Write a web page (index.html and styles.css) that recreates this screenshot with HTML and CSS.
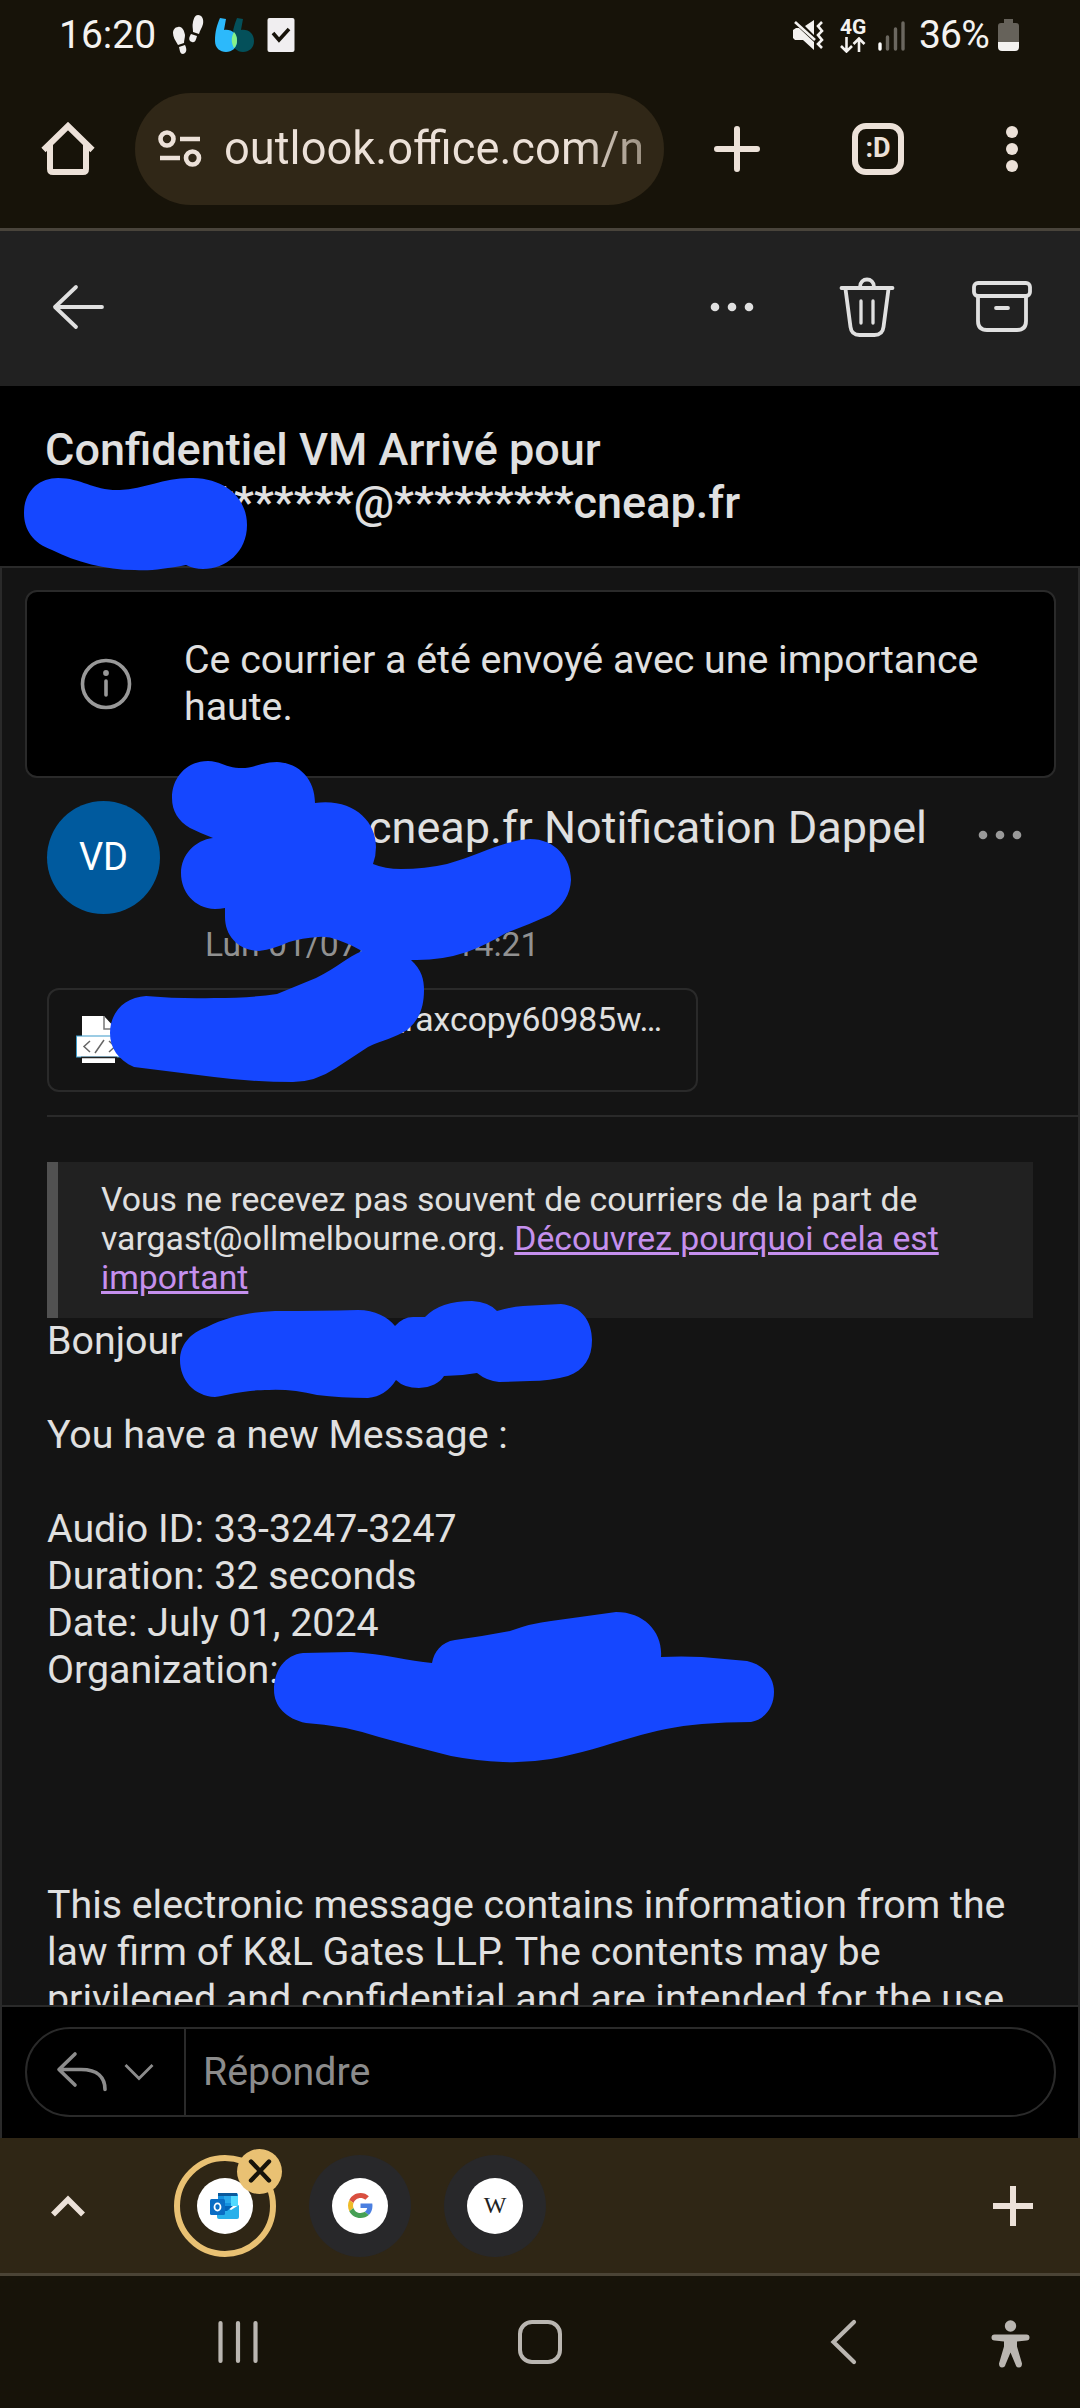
FILE: index.html
```html
<!DOCTYPE html>
<html lang="fr">
<head>
  <meta charset="UTF-8" />
  <meta name="viewport" content="width=device-width, initial-scale=1.0"/>
  <title>Outlook</title>
  <link rel="stylesheet" href="styles.css">
</head>
<body>

  <div class="status-bar">
    <span class="clock">16:20</span>
    <svg class="steps" width="32" height="40" viewBox="0 0 32 40" fill="#f0eeee">
      <path d="M6 12c4-1 6 3 7 8 0 3-1 5-1 8l-6 2C3 25 1 22 1 18c0-3 2-6 5-6zM7 32l6-2c2 4 2 8-2 9-3 0-3-3-4-7z"/>
      <path d="M26 0c4 0 6 4 5 9-1 4-3 6-4 10l-6-2c0-4-1-6 0-10 1-4 2-7 5-7zM19 19l6 2c-1 4-2 7-5 6-4-1-3-5-1-8z"/>
    </svg>
    <svg class="quotes" width="40" height="34" viewBox="0 0 40 34">
      <path d="M22 0l6 1-2 11c8-1 13 4 13 11s-5 11-11 11-11-5-11-11c0-8 2-16 5-23z" fill="#04505a"/>
      <path d="M5 0l6 1-2 11c8-1 13 4 13 11s-5 11-11 11S0 30 0 23C0 13 2 7 5 0z" fill="#2cb9fb"/>
      <path d="M19 14c4 4 4 13 0 16-3-5-3-11 0-16z" fill="#86f28a"/>
    </svg>
    <svg class="check" width="28" height="34" viewBox="0 0 28 34">
      <rect x="0.500" width="27" height="34" rx="2" fill="#f0eef0"/>
      <path d="M6 15l6 7L22 11" fill="none" stroke="#17130a" stroke-width="3.600"/>
    </svg>
    <svg class="mute" width="31" height="30" viewBox="0 0 31 30">
      <path d="M0 10l3-2h3l15 14v8L10 20H2l-2-2zM12 6l9-6v15z" fill="#f4f2f0"/>
      <path d="M2 2l20 18" stroke="#f4f2f0" stroke-width="2.600"/>
      <path d="M29 2l-4 4 4 5-4 4 4 5-4 4 4 4" fill="none" stroke="#f4f2f0" stroke-width="2.600"/>
    </svg>
    <div class="network">
      <span>4G</span>
      <svg width="26" height="16" viewBox="0 0 26 16" fill="none" stroke="#f4f2f0" stroke-width="2.600">
        <path d="M6.500 0v14M1 9l5.500 5.500L12 9M19 15V2M13.500 7L19 1.500 24.500 7"/>
      </svg>
    </div>
    <svg class="signal" width="28" height="31" viewBox="0 0 28 31" stroke-width="3.400" stroke-linecap="round">
      <path d="M2 24v5" stroke="#fff"/>
      <path d="M9.500 17v12M17.500 9v20M25 3v26" stroke="#6b675f"/>
    </svg>
    <span class="percent">36%</span>
    <svg class="battery" width="22" height="32" viewBox="0 0 22 32">
      <path d="M6 0h9v4h3q3 0 3 3v16H0V7q0-3 3-3h3z" fill="#66625a"/>
      <path d="M0 23h21v5q0 4-4 4H4q-4 0-4-4z" fill="#f4f2f0"/>
    </svg>
  </div>

  <div class="browser-bar">
    <svg class="home" width="54" height="54" viewBox="0 0 54 54" fill="none" stroke="#ece1d8" stroke-width="6">
      <path d="M2.500 28L27 4l24.500 24"/>
      <path d="M9 23v24q0 3 3 3h30q3 0 3-3V23"/>
    </svg>
    <div class="url-pill">
      <svg width="44" height="38" viewBox="0 0 44 38" fill="none" stroke="#ece1d8" stroke-width="4.600">
        <circle cx="9" cy="9" r="6.500"/>
        <path d="M22 9h20M2 28h20"/>
        <circle cx="34.500" cy="28" r="6.500"/>
      </svg>
      <span class="url">outlook.office.com/n</span>
    </div>
    <svg class="new-tab" width="48" height="48" viewBox="0 0 48 48" stroke="#ece1d8" stroke-width="6" stroke-linecap="round">
      <path d="M4 24h40M24 4v40"/>
    </svg>
    <div class="tab-count">:D</div>
    <svg class="menu" width="14" height="48" viewBox="0 0 14 48" fill="#ece1d8">
      <circle cx="7" cy="7" r="6"/><circle cx="7" cy="24" r="6"/><circle cx="7" cy="41" r="6"/>
    </svg>
  </div>

  <header>
    <svg class="back" width="54" height="46" viewBox="0 0 54 46" fill="none" stroke="#e0e0e0" stroke-width="3.800" stroke-linecap="round" stroke-linejoin="round">
      <path d="M50 23H3M24 3L3 23l21 20"/>
    </svg>
    <svg class="more" width="44" height="10" viewBox="0 0 44 10" fill="#e0e0e0">
      <circle cx="5" cy="5" r="4.300"/><circle cx="22" cy="5" r="4.300"/><circle cx="39" cy="5" r="4.300"/>
    </svg>
    <svg class="trash" width="56" height="60" viewBox="0 0 56 60" fill="none" stroke="#e0e0e0" stroke-width="3.800" stroke-linecap="round">
      <path d="M2.500 11h51M21 10c0-10 14-10 14 0M6.500 12l5 38q1 8 9 8h15q8 0 9-8l5-38"/>
      <path d="M22 24v22M34 24v22" stroke-width="3.300"/>
    </svg>
    <svg class="archive" width="60" height="52" viewBox="0 0 60 52" fill="none" stroke="#e0e0e0" stroke-width="3.800">
      <rect x="2" y="2" width="56" height="13" rx="4"/>
      <path d="M6 15v25q0 9 9 9h30q9 0 9-9V15"/>
      <path d="M24 27h12" stroke-linecap="round"/>
    </svg>
  </header>

  <h1 class="subject">Confidentiel VM Arrivé pour<br><span class="address">*******@*********cneap.fr</span></h1>

  <main class="mail">
    <div class="scroll">
      <div class="notice">
        <svg width="52" height="52" viewBox="0 0 52 52" fill="none" stroke="#999" stroke-width="3.600">
          <circle cx="26" cy="26" r="23.500"/>
          <path d="M26 23v14" stroke-linecap="round"/>
          <circle cx="26" cy="15" r="2.900" fill="#999" stroke="none"/>
        </svg>
        <p>Ce courrier a été envoyé avec une importance haute.</p>
      </div>

      <div class="sender">
        <div class="avatar">VD</div>
        <div class="sender-info">
          <div class="name">cneap.fr Notification Dappel</div>
          <div class="date">Lun 01/07/2024 14:21</div>
        </div>
        <svg class="more" width="44" height="10" viewBox="0 0 44 10" fill="#999">
          <circle cx="5" cy="5" r="4.300"/><circle cx="22" cy="5" r="4.300"/><circle cx="39" cy="5" r="4.300"/>
        </svg>
      </div>

      <div class="attachment">
        <svg width="46" height="50" viewBox="0 0 46 50">
          <path d="M6 1h22l11 12v35H6z" fill="#fff"/>
          <path d="M28 1v13h11" fill="none" stroke="#777" stroke-width="1.500"/>
          <rect x="0.500" y="21" width="45" height="21" fill="#fff" stroke="#3a9ac9"/>
          <path d="M5 42.500h36" stroke="#222" stroke-width="1.500"/>
          <path d="M14 26l-6 5.500 6 5.500M28 25l-9 13M33 26l6 5.500-6 5.500" fill="none" stroke="#666" stroke-width="1.500"/>
        </svg>
        <span>_faxcopy60985w…</span>
      </div>

      <div class="content">
        <div class="warning">Vous ne recevez pas souvent de courriers de la part de vargast@ollmelbourne.org. <a href="#">Découvrez pourquoi cela est important</a></div>
        <p>Bonjour</p>
        <p>You have a new Message :</p>
        <p>Audio ID: 33-3247-3247<br>Duration: 32 seconds<br>Date: July 01, 2024<br>Organization:</p>
        <p class="legal">This electronic message contains information from the law firm of K&amp;L Gates LLP. The contents may be privileged and confidential and are intended for the use</p>
      </div>
    </div>

    <div class="reply-area">
      <div class="reply-box">
        <div class="reply-action">
          <svg width="54" height="42" viewBox="0 0 54 42" fill="none" stroke="#8c8c8c" stroke-width="3.600" stroke-linecap="round" stroke-linejoin="round">
            <path d="M19 3L3 18.500 19 34M3 18.500h22c17 0 24 8 24 20"/>
          </svg>
          <svg width="30" height="18" viewBox="0 0 30 18" fill="none" stroke="#8c8c8c" stroke-width="2.800">
            <path d="M1.500 2L15 15.500 28.500 2"/>
          </svg>
        </div>
        <span>Répondre</span>
      </div>
    </div>
  </main>

  <div class="tab-strip">
    <svg class="expand" width="36" height="24" viewBox="0 0 36 24" fill="none" stroke="#ece1d8" stroke-width="5.600">
      <path d="M3 20.500L18 5.500l15 15"/>
    </svg>
    <div class="tab active">
      <div class="favicon">
        <svg width="30" height="28" viewBox="0 0 30 28">
          <path d="M8 1h18q2 0 2 2v11H8z" fill="#1490df"/>
          <path d="M8 1h19v3H8z" fill="#0a5a9c"/>
          <path d="M14 4h7v7h-7z" fill="#28a8ea"/>
          <path d="M21 4h7v10h-7z" fill="#50d9ff"/>
          <path d="M7 14h7l7 4 8-5v12q0 2-2 2H9q-2 0-2-2z" fill="#28b0ea"/>
          <path d="M14 14h9l-6 5h-3z" fill="#0364b8"/>
          <rect y="7" width="15" height="16" rx="1.500" fill="#0a6dc4"/>
          <ellipse cx="7.500" cy="15" rx="3" ry="3.600" fill="none" stroke="#fff" stroke-width="1.800"/>
        </svg>
      </div>
      <div class="close">
        <svg width="24" height="24" viewBox="0 0 24 24" stroke="#17130a" stroke-width="4.400" stroke-linecap="round">
          <path d="M3 2.500l18 19M21 2.500L3 21.500"/>
        </svg>
      </div>
    </div>
    <div class="tab">
      <div class="favicon">
        <svg width="25" height="25" viewBox="0 0 48 48">
          <path fill="#d94f40" d="M24 9.500c3.500 0 6.700 1.200 9.200 3.600l6.900-6.900C35.900 2.400 30.500 0 24 0 14.600 0 6.500 5.400 2.600 13.200l8 6.200C12.400 13.700 17.700 9.500 24 9.500z"/>
          <path fill="#4a7fe0" d="M47 24.500c0-1.600-.2-3.100-.4-4.500H24v9h12.900c-.6 3-2.200 5.500-4.700 7.200l7.700 6C44.400 38 47 31.800 47 24.500z"/>
          <path fill="#eebb28" d="M10.500 28.600c-.5-1.500-.8-3-.8-4.600s.3-3.100.8-4.600l-8-6.200C.9 16.500 0 20.100 0 24s.9 7.500 2.600 10.800z"/>
          <path fill="#46a055" d="M24 48c6.500 0 11.900-2.100 15.900-5.800l-7.700-6c-2.200 1.400-4.900 2.300-8.200 2.300-6.300 0-11.600-4.200-13.500-9.900l-8 6.200C6.500 42.600 14.600 48 24 48z"/>
        </svg>
      </div>
    </div>
    <div class="tab">
      <div class="favicon wiki">W</div>
    </div>
    <svg class="add" width="40" height="40" viewBox="0 0 40 40" stroke="#ece1d8" stroke-width="6">
      <path d="M0 20h40M20 0v40"/>
    </svg>
  </div>

  <nav>
    <svg class="recents" width="40" height="44" viewBox="0 0 40 44" stroke="#bab6b1" stroke-width="4.200" stroke-linecap="round">
      <path d="M2.500 3v38M20 3v38M37.500 3v38"/>
    </svg>
    <div class="home-key"></div>
    <svg class="back-key" width="28" height="46" viewBox="0 0 28 46" fill="none" stroke="#bab6b1" stroke-width="4.200" stroke-linecap="round">
      <path d="M24 3L3.500 23 24 43"/>
    </svg>
    <svg class="access" width="40" height="48" viewBox="0 0 40 48" fill="#bab6b1">
      <circle cx="19.500" cy="6" r="5.700"/>
      <path d="M3.500 14.500h32q3 0 3 3t-3 3l-9.500 1v5l5 17q0 4-3 4t-3.500-3l-5-12-5 12q-.5 3-3.500 3t-3-4l5-17v-5l-9.500-1q-3 0-3-3t3-3z"/>
    </svg>
  </nav>

  <!-- marker strokes hiding the personal data -->
  <svg class="marker" width="1080" height="2408" viewBox="0 0 1080 2408" fill="#1547ff">
    <path d="M24 513C24 490 40 478 58 478C82 478 94 491 120 490C145 489 165 477 193 478C228 479 247 500 247 525C247 552 226 569 203 569Q194 569 186 565C165 569 150 571 135 570C105 570 76 562 52 550C33 543 24 530 24 513Z"/>
    <path d="M172 798C172 776 188 761 208 761C220 761 227 768 239 768C252 769 262 762 277 762C300 763 315 780 315 803C352 798 376 820 376 847Q376 856 373 864Q385 869 401 869Q425 869 447 864C480 855 505 840 530 839C555 839 571 858 571 880Q570 901 550 915Q528 925 506 933Q486 945 467 952Q440 961 411 960C422 970 424 980 424 990C424 1008 419 1020 407 1030C395 1038 382 1040 368 1047L336 1068Q315 1082 293 1082Q252 1082 214 1077L134 1067C118 1060 110 1048 110 1033C110 1012 125 997 146 996Q180 999 214 998Q250 998 277 994L316 978C336 968 348 957 362 951Q350 944 338 940Q328 936 318 937Q302 938 289 942Q274 949 259 951C238 950 225 936 225 917L225 908Q220 909 215 909C194 908 181 892 181 873C181 855 195 840 213 838Q200 833 190 828C178 821 172 811 172 798Z"/>
    <path d="M180 1360C180 1345 190 1333 207 1327C227 1317 250 1312 275 1311Q320 1311 358 1310C375 1310 388 1317 395 1326Q403 1317 413 1317L425 1317Q440 1301 472 1301Q489 1302 497 1311Q510 1307 523 1306L561 1304C582 1306 592 1322 592 1340C592 1358 584 1370 568 1376Q550 1381 530 1381L499 1382Q487 1381 477 1373Q461 1376 444 1376Q437 1387 419 1388Q404 1388 396 1380Q386 1396 368 1398Q341 1398 317 1395Q292 1389 269 1390C245 1390 232 1394 215 1397C194 1396 180 1380 180 1360Z"/>
    <path d="M274 1690C274 1670 285 1655 303 1653L351 1652C385 1654 409 1661 432 1663C434 1652 441 1642 455 1640Q484 1636 510 1631Q532 1623 551 1621L616 1612C645 1612 663 1633 661 1657Q681 1656 702 1657L747 1661C765 1665 774 1678 774 1692C774 1706 766 1719 751 1722Q726 1722 702 1724C676 1726 655 1731 634 1737C606 1745 579 1754 551 1759Q527 1763 503 1762Q477 1761 451 1756Q415 1747 379 1737Q342 1725 306 1723C286 1719 274 1706 274 1690Z"/>
  </svg>

</body>
</html>
```
FILE: styles.css
```css
body {
  margin: 0;
  width: 1080px;
  height: 2408px;
  overflow: hidden;
  font-family: Roboto, "Liberation Sans", sans-serif;
  background-color: #171309;
  color: #e0e0e0;
  position: relative;
}

svg {
  display: block;
  flex: none;
}

p {
  margin: 0;
}

/* phone status bar */
.status-bar {
  height: 70px;
  display: flex;
  align-items: center;
  box-sizing: border-box;
  padding-left: 59px;
  color: #f4f2f0;
}

.clock,
.percent {
  font-size: 39px;
  line-height: 46px;
}

.clock {
  width: 113px;
}

.quotes {
  margin-left: 11px;
}

.check {
  margin-left: 12px;
}

.mute {
  margin-left: 498px;
}

.network {
  width: 27px;
  margin-left: 16px;
  font-size: 21px;
  line-height: 18px;
  font-weight: 700;
}

.network svg {
  margin-top: 1px;
}

.signal {
  margin-left: 11px;
}

.percent {
  margin-left: 13px;
  width: 79px;
  letter-spacing: -0.8px;
}

/* browser toolbar */
.browser-bar {
  height: 161px;
  box-sizing: border-box;
  border-bottom: 3px solid #49443b;
  display: flex;
  align-items: center;
  padding-left: 41px;
}

.url-pill {
  margin-left: 40px;
  width: 529px;
  height: 112px;
  box-sizing: border-box;
  border-radius: 56px;
  background-color: #302717;
  display: flex;
  align-items: center;
  padding-left: 23px;
}

.url {
  margin-left: 22px;
  width: 417px;
  overflow: hidden;
  white-space: nowrap;
  font-size: 45.3px;
  line-height: 56px;
  color: transparent;
  background: linear-gradient(to right, #ece1d8 350px, #8f8474 430px);
  background-clip: text;
}

.new-tab {
  margin-left: 49px;
}

.tab-count {
  margin-left: 91px;
  width: 52px;
  height: 52px;
  box-sizing: border-box;
  border: 6px solid #ece1d8;
  border-radius: 14px;
  text-align: center;
  font-size: 27px;
  line-height: 39px;
  font-weight: 700;
  color: #ece1d8;
}

.menu {
  margin-left: 101px;
}

/* outlook header */
header {
  height: 155px;
  box-sizing: border-box;
  background-color: #212121;
  display: flex;
  align-items: center;
  padding: 0 0 4px 52px;
}

header .more {
  margin-left: 604px;
}

.trash {
  margin-left: 85px;
}

.archive {
  margin-left: 77px;
}

.subject {
  margin: 0;
  height: 180px;
  box-sizing: border-box;
  padding: 37px 45px;
  background-color: #000;
  font-size: 45px;
  line-height: 53px;
  font-weight: 500;
}

.address {
  padding-left: 169px;
}

.mail {
  height: 1572px;
  box-sizing: border-box;
  border: 2px solid #2a2a2a;
  border-bottom: none;
  background-color: #141414;
}

.scroll {
  height: 1437px;
  overflow: hidden;
}

.notice {
  margin: 22px 22px 0 23px;
  height: 188px;
  box-sizing: border-box;
  border: 2px solid #2a2a2a;
  border-radius: 12px;
  background-color: #000;
  display: flex;
  align-items: center;
  padding: 0 30px 0 53px;
}

.notice p {
  margin-left: 52px;
  font-size: 39.35px;
  line-height: 47px;
}

.sender {
  margin: 23px 0 0 45px;
  height: 187px;
  display: flex;
}

.avatar {
  width: 113px;
  height: 113px;
  border-radius: 50%;
  background-color: #005a9e;
  color: #fff;
  font-size: 38px;
  line-height: 112px;
  text-align: center;
}

.sender-info {
  width: 721px;
  margin-left: 45px;
}

.name {
  margin-left: 163px;
  white-space: nowrap;
  font-size: 45px;
  line-height: 53px;
}

.date {
  margin-top: 71px;
  font-size: 33.7px;
  line-height: 39px;
  color: #919191;
}

.sender .more {
  margin: 29px 0 0 52px;
}

.attachment {
  margin-left: 45px;
  width: 651px;
  height: 104px;
  box-sizing: border-box;
  border: 2px solid #2a2a2a;
  border-radius: 12px;
  display: flex;
  align-items: center;
  padding-left: 27px;
}

.attachment span {
  flex: 1;
  margin: 0 34px 42px 0;
  text-align: right;
  font-size: 33.7px;
  line-height: 39px;
}

.content {
  margin: 23px 0 0 45px;
  border-top: 2px solid #2a2a2a;
  padding: 45px 45px 0 0;
  font-size: 39.35px;
  line-height: 47px;
}

.content p {
  margin-bottom: 47px;
}

.content .legal {
  margin-top: 188px;
}

.warning {
  height: 156px;
  box-sizing: border-box;
  border-left: 11px solid #515151;
  background-color: #212121;
  padding: 18px 43px;
  font-size: 33.75px;
  line-height: 39px;
}

.warning a {
  color: #c590ee;
}

.reply-area {
  height: 133px;
  box-sizing: border-box;
  border-top: 2px solid #2a2a2a;
  background-color: #000;
  padding: 20px 22px 0 23px;
}

.reply-box {
  height: 90px;
  box-sizing: border-box;
  border: 2px solid #2a2a2a;
  border-radius: 45px;
  display: flex;
  align-items: center;
  font-size: 39.35px;
  color: #8c8c8c;
}

.reply-action {
  width: 159px;
  height: 86px;
  border-right: 2px solid #2a2a2a;
  display: flex;
  align-items: center;
  box-sizing: border-box;
  padding-left: 29px;
  gap: 14px;
}

.reply-box span {
  margin-left: 17px;
}

/* browser tab strip */
.tab-strip {
  height: 138px;
  box-sizing: border-box;
  border-bottom: 3px solid #4b4436;
  background-color: #2f2615;
  display: flex;
  align-items: center;
  padding-left: 50px;
}

.tab {
  width: 102px;
  height: 102px;
  margin-left: 33px;
  border-radius: 50%;
  background-color: #28282a;
  display: flex;
  align-items: center;
  justify-content: center;
}

.tab.active {
  position: relative;
  margin-left: 88px;
  box-sizing: border-box;
  border: 6px solid #e9c173;
  background: none;
}

.favicon {
  width: 56px;
  height: 56px;
  border-radius: 50%;
  background-color: #fff;
  display: flex;
  align-items: center;
  justify-content: center;
}

.wiki {
  font-family: "Liberation Serif", serif;
  font-size: 24px;
  color: #222;
}

.close {
  position: absolute;
  top: -12px;
  right: -12px;
  width: 45px;
  height: 45px;
  border-radius: 50%;
  background-color: #e9c173;
  display: flex;
  align-items: center;
  justify-content: center;
}

.add {
  margin-left: 447px;
}

/* android navigation */
nav {
  height: 132px;
  display: flex;
  align-items: center;
  padding-left: 218px;
}

.home-key {
  margin-left: 260px;
  width: 44px;
  height: 44px;
  box-sizing: border-box;
  border: 4px solid #bab6b1;
  border-radius: 14px;
}

.back-key {
  margin-left: 268px;
}

.access {
  margin-left: 133px;
  margin-top: 4px;
}

.marker {
  position: absolute;
  top: 0;
  left: 0;
}
```
